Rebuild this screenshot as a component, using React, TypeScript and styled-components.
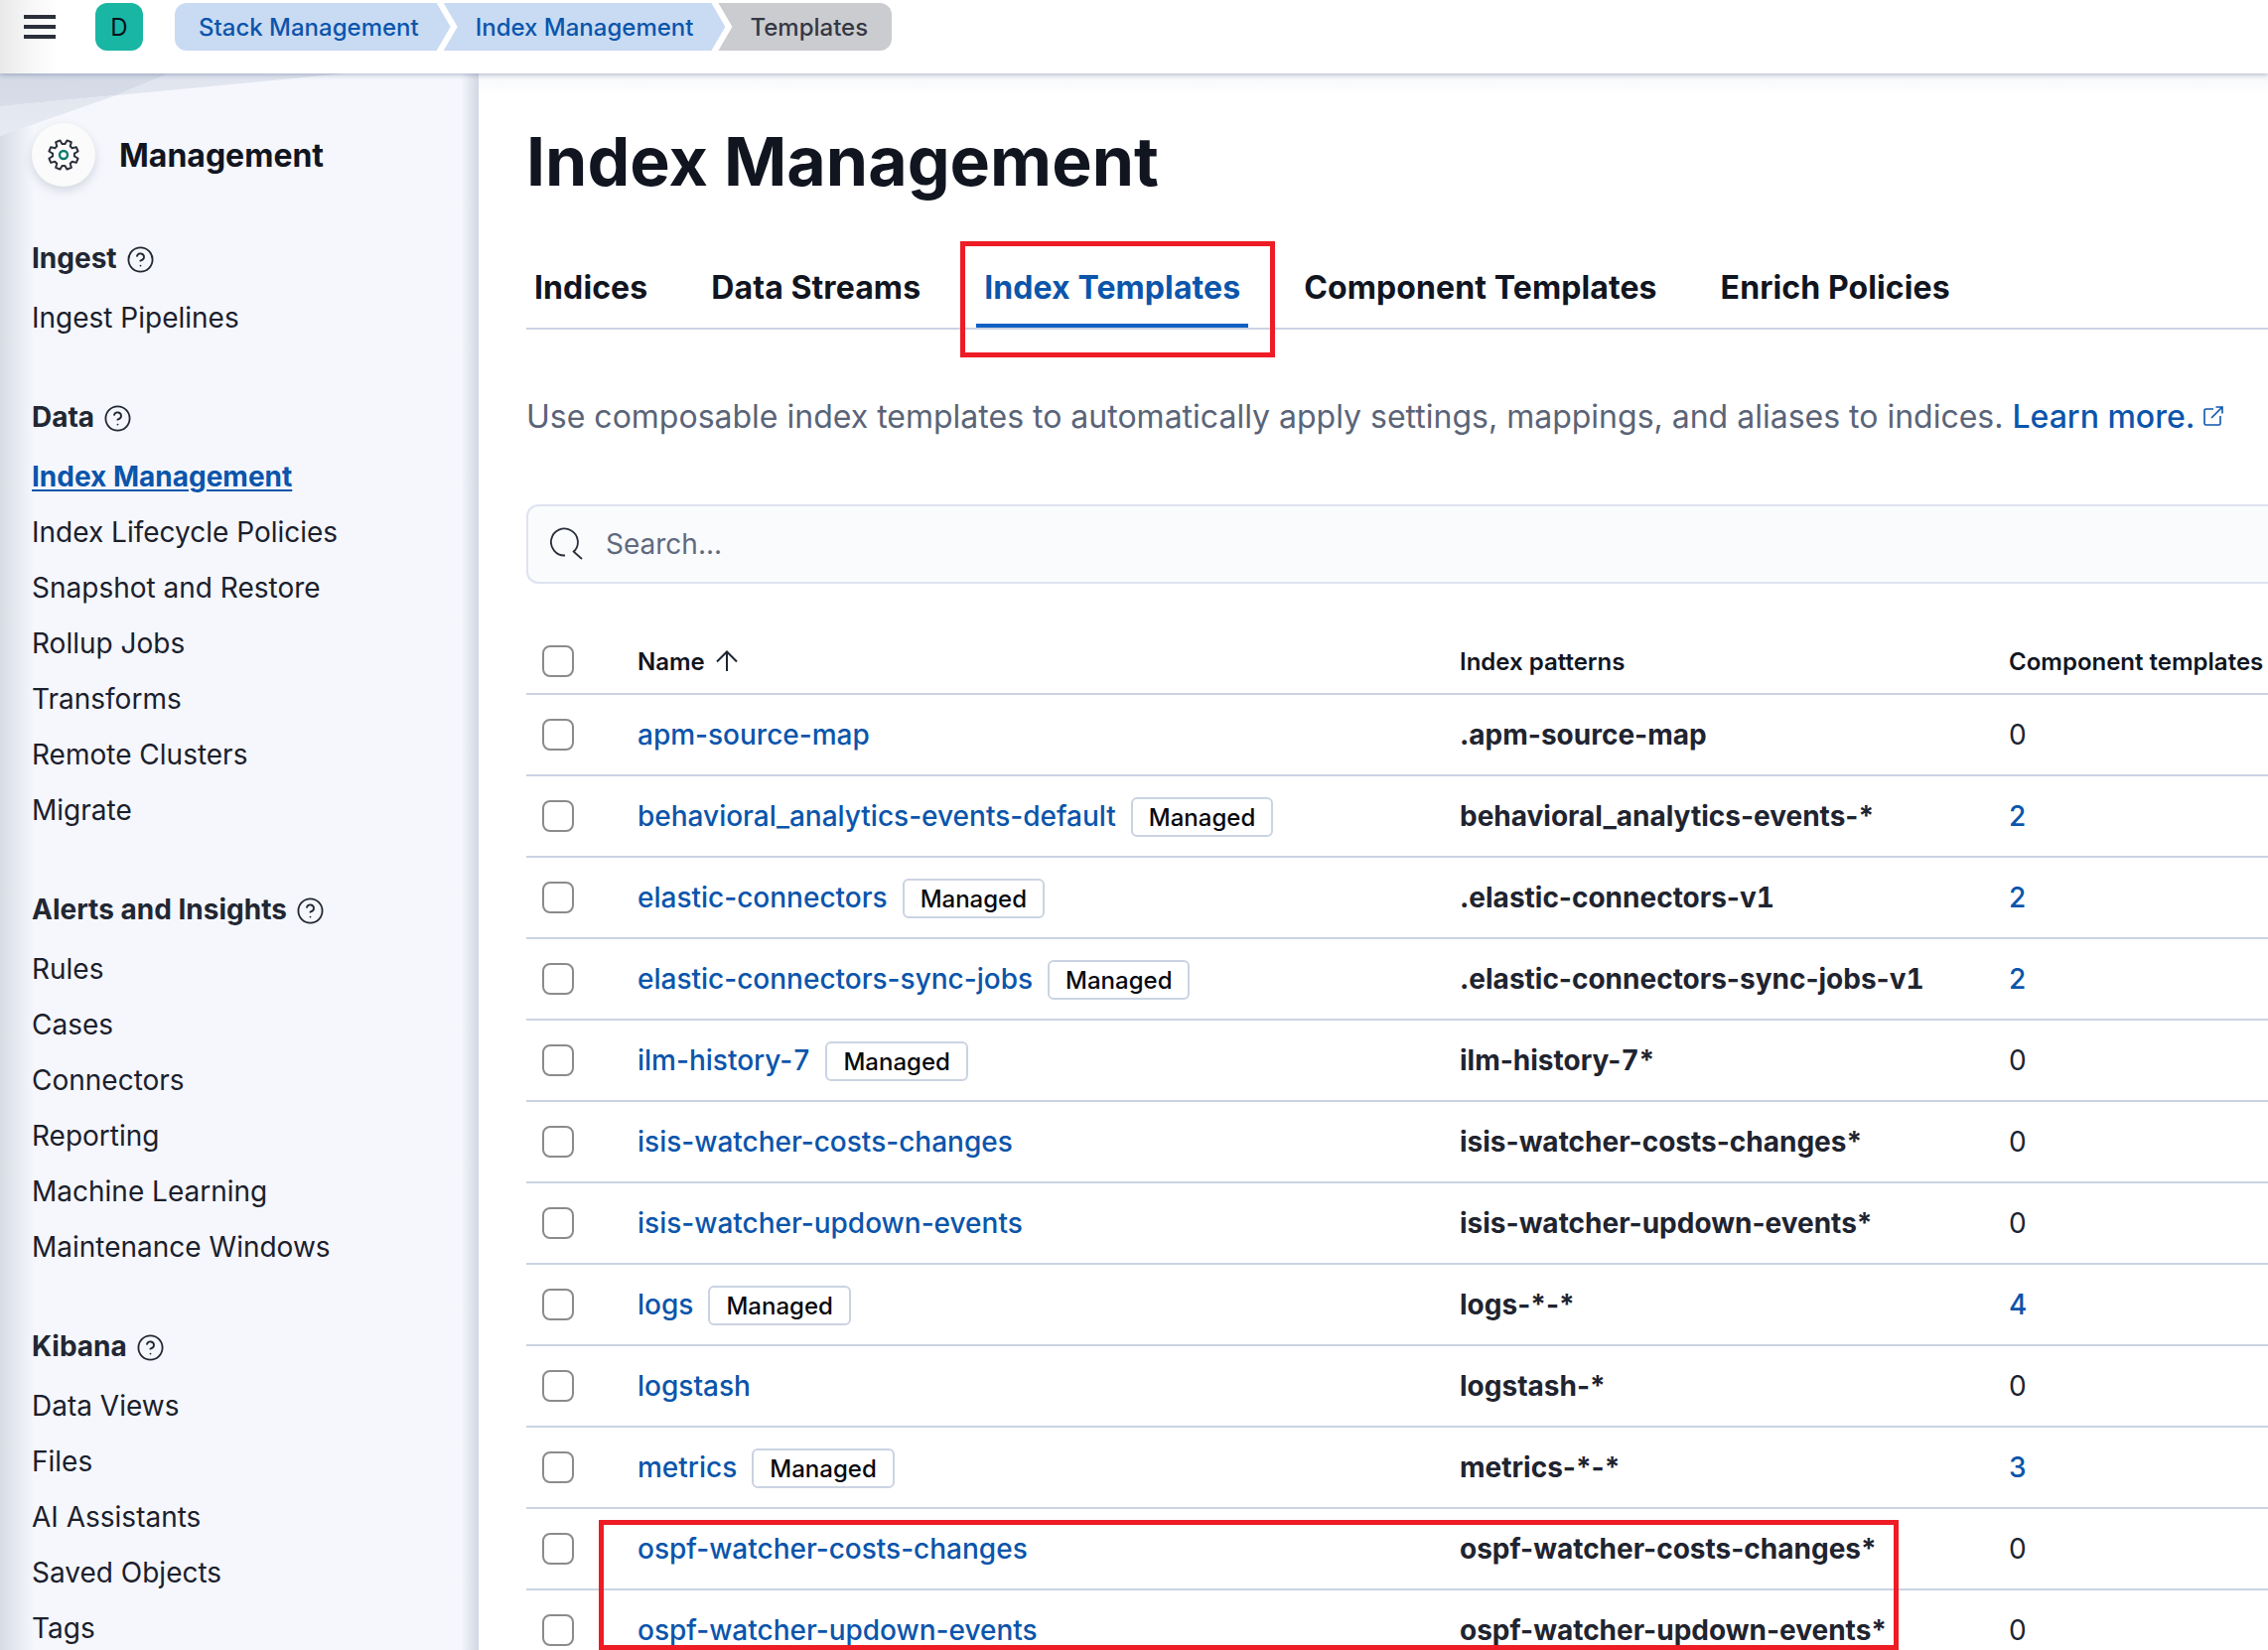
import React from "react";
import styled, { createGlobalStyle } from "styled-components";
import { CircleHelp } from "lucide-react";

const GlobalStyle = createGlobalStyle`
  html, body {
    margin: 0;
    padding: 0;
    background: #ffffff;
  }
  body {
    font-family: Inter, "Noto Sans", "Liberation Sans", sans-serif;
    color: #1d2433;
  }
  * {
    box-sizing: border-box;
  }
`;

const Page = styled.div`
  position: relative;
  width: 2284px;
  height: 1662px;
  overflow: hidden;
  display: flex;
  flex-direction: column;
`;

const Header = styled.header`
  position: relative;
  z-index: 2;
  flex: 0 0 74px;
  display: flex;
  align-items: flex-start;
  padding: 3px 0 0 24px;
  background: linear-gradient(90deg, #e9e9ea 0, #f8f8f9 34px, #ffffff 60px);
  box-shadow: 0 1px 5px rgba(74, 94, 136, 0.45);
`;

const MenuButton = styled.div`
  width: 32px;
  height: 48px;
  display: flex;
  flex-direction: column;
  gap: 6px;
  padding-top: 12px;
  span {
    height: 4px;
    background: #2b2f3a;
  }
`;

const Avatar = styled.div`
  width: 48px;
  height: 48px;
  margin-left: 40px;
  border-radius: 12px;
  background: #19b6a4;
  color: #07101a;
  font-size: 24px;
  display: flex;
  align-items: center;
  justify-content: center;
`;

const Crumbs = styled.nav`
  display: flex;
  margin-left: 32px;
`;

type CrumbKind = "first" | "middle" | "last";

const crumbClip: Record<CrumbKind, string> = {
  first: "polygon(0 0, calc(100% - 14px) 0, 100% 50%, calc(100% - 14px) 100%, 0 100%)",
  middle: "polygon(0 0, calc(100% - 14px) 0, 100% 50%, calc(100% - 14px) 100%, 0 100%, 14px 50%)",
  last: "polygon(0 0, 100% 0, 100% 100%, 0 100%, 14px 50%)",
};

const Crumb = styled.a<{ $kind: CrumbKind }>`
  height: 48px;
  display: flex;
  align-items: center;
  font-size: 24px;
  font-weight: 500;
  white-space: nowrap;
  margin-left: ${(p) => (p.$kind === "first" ? "0" : "-7px")};
  padding: ${(p) =>
    p.$kind === "first" ? "0 32px 0 24px" : p.$kind === "last" ? "0 24px 0 32px" : "0 32px"};
  color: ${(p) => (p.$kind === "last" ? "#343844" : "#0b55ab")};
  background: ${(p) => (p.$kind === "last" ? "#cbccd0" : "#c9dbf3")};
  border-radius: ${(p) =>
    p.$kind === "first" ? "12px 0 0 12px" : p.$kind === "last" ? "0 12px 12px 0" : "0"};
  clip-path: ${(p) => crumbClip[p.$kind]};
`;

const Body = styled.div`
  flex: 1;
  display: flex;
  min-height: 0;
`;

const Sidebar = styled.aside`
  position: relative;
  flex: 0 0 482px;
  padding: 50px 0 0 32px;
  background:
    linear-gradient(90deg, rgba(180, 186, 200, 0.45) 0, rgba(180, 186, 200, 0) 34px),
    linear-gradient(270deg, #d2d7e2 0, rgba(210, 215, 226, 0) 18px),
    #f5f7fc;
`;

const WedgeDark = styled.div`
  position: absolute;
  inset: 0 0 auto 0;
  height: 70px;
  background: linear-gradient(180deg, #d3d9e5, #dde2ec);
  clip-path: polygon(0 0, 170px 0, 117px 22px, 0 33px);
`;

const WedgeLight = styled.div`
  position: absolute;
  inset: 0 0 auto 0;
  height: 70px;
  background: linear-gradient(180deg, #dfe4ee, #e8ebf3);
  clip-path: polygon(170px 0, 347px 0, 117px 22px, 0 63px, 0 33px, 117px 22px);
`;

const SideTitle = styled.div`
  position: relative;
  display: flex;
  align-items: center;
  gap: 24px;
  margin-bottom: 44px;
  font-size: 32px;
  font-weight: 700;
  color: #11151f;
`;

const GearBadge = styled.div`
  width: 64px;
  height: 64px;
  border-radius: 50%;
  background: #fbfbfc;
  box-shadow: 0 4px 10px rgba(90, 100, 125, 0.22);
  display: flex;
  align-items: center;
  justify-content: center;
`;

const NavGroup = styled.div`
  position: relative;
  margin-bottom: 44px;
`;

const NavHeading = styled.div`
  height: 56px;
  margin-bottom: 4px;
  display: flex;
  align-items: center;
  gap: 9px;
  font-size: 28px;
  font-weight: 700;
  color: #222733;
  svg {
    margin-top: 2px;
  }
`;

const NavItem = styled.a<{ $active?: boolean }>`
  display: flex;
  align-items: center;
  height: 56px;
  font-size: 28px;
  white-space: nowrap;
  color: ${(p) => (p.$active ? "#0b55ab" : "#1b202c")};
  font-weight: ${(p) => (p.$active ? 700 : 400)};
  text-decoration: ${(p) => (p.$active ? "underline" : "none")};
  text-underline-offset: 3px;
  text-decoration-thickness: 2px;
`;

const Main = styled.main`
  flex: 1;
  min-width: 0;
  padding: 50px 0 0 48px;
  background: linear-gradient(180deg, #f6f7f9 0, #ffffff 22px);
`;

const Title = styled.h1`
  margin: 0;
  height: 78px;
  line-height: 76px;
  font-size: 68px;
  font-weight: 700;
  color: #11151f;
`;

const Tabs = styled.div`
  display: flex;
  gap: 48px;
  height: 76px;
  margin-top: 54px;
  border-bottom: 2px solid #cbd3e2;
`;

const Tab = styled.a<{ $active?: boolean }>`
  height: 74px;
  padding: 0 8px 4px;
  display: flex;
  align-items: center;
  font-size: 32px;
  font-weight: 700;
  letter-spacing: 0.1px;
  white-space: nowrap;
  color: ${(p) => (p.$active ? "#0b55ab" : "#11151f")};
  border-bottom: 4px solid ${(p) => (p.$active ? "#0f60c4" : "transparent")};
`;

const Description = styled.p`
  margin: 59px 0 0;
  display: flex;
  align-items: center;
  height: 56px;
  font-size: 32px;
  color: #5a6478;
  white-space: nowrap;
`;

const LearnLink = styled.a`
  margin-left: 9px;
  color: #0b55ab;
  display: inline-flex;
  align-items: center;
  gap: 9px;
  font-weight: 500;
`;

const SearchBox = styled.div`
  margin-top: 61px;
  width: 1900px;
  height: 80px;
  display: flex;
  align-items: center;
  gap: 22px;
  padding-left: 22px;
  background: #fafbfd;
  border: 2px solid #dfe3f0;
  border-radius: 12px;
  font-size: 28px;
  color: #5f6a80;
`;

const Table = styled.table`
  width: 100%;
  margin-top: 46px;
  border-collapse: collapse;
  table-layout: fixed;
`;

const HeaderCell = styled.th<{ $width?: number }>`
  width: ${(p) => (p.$width ? `${p.$width}px` : "auto")};
  height: 65px;
  padding: 0;
  border-bottom: 2px solid #cbd3e2;
  text-align: left;
  font-size: 24px;
  font-weight: 600;
  color: #11151f;
  white-space: nowrap;
`;

const HeaderInner = styled.span`
  display: inline-flex;
  align-items: center;
  gap: 10px;
`;

const Row = styled.tr`
  height: 82px;
`;

const Cell = styled.td`
  height: 82px;
  padding: 0;
  border-bottom: 2px solid #cbd3e2;
  font-size: 28px;
  white-space: nowrap;
  color: #1d2433;
`;

const PatternCell = styled(Cell)`
  font-weight: 700;
  color: #1f2430;
`;

const NameWrap = styled.div`
  display: flex;
  align-items: center;
  gap: 15px;
`;

const NameLink = styled.a`
  color: #0b55ab;
  font-weight: 500;
`;

const CountLink = styled.a`
  color: #0b55ab;
  font-weight: 500;
`;

const Digit = styled.span`
  font-variant-numeric: tabular-nums;
`;

const Badge = styled.span`
  height: 40px;
  margin-top: 2px;
  display: inline-flex;
  align-items: center;
  padding: 0 16px;
  border: 2px solid #cbd3e2;
  border-radius: 6px;
  font-size: 24px;
  font-weight: 500;
  color: #07090f;
`;

const Checkbox = styled.span`
  display: block;
  width: 32px;
  height: 32px;
  margin-left: 16px;
  border: 2.5px solid #8b8b8d;
  border-radius: 8px;
  background: #ffffff;
`;

const RedBox = styled.div<{ $x: number; $y: number; $w: number; $h: number }>`
  position: absolute;
  left: ${(p) => p.$x}px;
  top: ${(p) => p.$y}px;
  width: ${(p) => p.$w}px;
  height: ${(p) => p.$h}px;
  border: 5px solid #ee1c25;
  pointer-events: none;
`;

const gearPoints = (() => {
  const pts: string[] = [];
  const at = (deg: number, r: number) => {
    const a = (deg * Math.PI) / 180;
    return `${(16 + r * Math.cos(a)).toFixed(2)},${(16 + r * Math.sin(a)).toFixed(2)}`;
  };
  for (let i = 0; i < 8; i++) {
    const c = i * 45 + 22.5;
    pts.push(at(c - 15, 11), at(c - 9, 15), at(c + 9, 15), at(c + 15, 11));
  }
  return pts.join(" ");
})();

const GearIcon = () => (
  <svg width="32" height="32" viewBox="0 0 32 32" fill="none">
    <polygon points={gearPoints} stroke="#2b2f3a" strokeWidth="2" strokeLinejoin="round" />
    <circle cx="16" cy="16" r="4" stroke="#0f7a6e" strokeWidth="2.4" />
  </svg>
);

const SearchIcon = () => (
  <svg width="34" height="34" viewBox="0 0 34 34" fill="none" stroke="#2a2e3a" strokeWidth="1.8">
    <path d="M15 28.5A13.5 13.5 0 1 1 24 24.5" />
    <path d="M23 24l9 8" />
  </svg>
);

const ArrowUpIcon = () => (
  <svg width="24" height="22" viewBox="0 0 24 22" fill="none" stroke="#1d2433" strokeWidth="2">
    <path d="M12 21V1.5M2 11.5 12 1.5l10 10" />
  </svg>
);

const ExternalIcon = () => (
  <svg width="20" height="20" viewBox="0 0 20 20" fill="none" stroke="#0b55ab" strokeWidth="1.6">
    <path d="M10 3H2.5A1.5 1.5 0 0 0 1 4.5v13A1.5 1.5 0 0 0 2.5 19h13a1.5 1.5 0 0 0 1.5-1.5V10" />
    <path d="M8 12 18.5 1.5M12.5 1H19v6.5" />
  </svg>
);

// digits are tabular in the table, hyphens stay proportional
const withDigits = (text: string) =>
  text.split(/(\d)/).map((part, i) => (i % 2 ? <Digit key={i}>{part}</Digit> : part));

const navGroups = [
  { heading: "Ingest", items: ["Ingest Pipelines"] },
  {
    heading: "Data",
    items: [
      "Index Management",
      "Index Lifecycle Policies",
      "Snapshot and Restore",
      "Rollup Jobs",
      "Transforms",
      "Remote Clusters",
      "Migrate",
    ],
  },
  {
    heading: "Alerts and Insights",
    items: ["Rules", "Cases", "Connectors", "Reporting", "Machine Learning", "Maintenance Windows"],
  },
  { heading: "Kibana", items: ["Data Views", "Files", "AI Assistants", "Saved Objects", "Tags"] },
];

const tabs = ["Indices", "Data Streams", "Index Templates", "Component Templates", "Enrich Policies"];

const templates = [
  { name: "apm-source-map", pattern: ".apm-source-map", count: 0 },
  { name: "behavioral_analytics-events-default", managed: true, pattern: "behavioral_analytics-events-*", count: 2 },
  { name: "elastic-connectors", managed: true, pattern: ".elastic-connectors-v1", count: 2 },
  { name: "elastic-connectors-sync-jobs", managed: true, pattern: ".elastic-connectors-sync-jobs-v1", count: 2 },
  { name: "ilm-history-7", managed: true, pattern: "ilm-history-7*", count: 0 },
  { name: "isis-watcher-costs-changes", pattern: "isis-watcher-costs-changes*", count: 0 },
  { name: "isis-watcher-updown-events", pattern: "isis-watcher-updown-events*", count: 0 },
  { name: "logs", managed: true, pattern: "logs-*-*", count: 4 },
  { name: "logstash", pattern: "logstash-*", count: 0 },
  { name: "metrics", managed: true, pattern: "metrics-*-*", count: 3 },
  { name: "ospf-watcher-costs-changes", pattern: "ospf-watcher-costs-changes*", count: 0 },
  { name: "ospf-watcher-updown-events", pattern: "ospf-watcher-updown-events*", count: 0 },
];

const App: React.FC = () => (
  <Page>
    <GlobalStyle />
    <Header>
      <MenuButton>
        <span />
        <span />
        <span />
      </MenuButton>
      <Avatar>D</Avatar>
      <Crumbs>
        <Crumb $kind="first">Stack Management</Crumb>
        <Crumb $kind="middle">Index Management</Crumb>
        <Crumb $kind="last">Templates</Crumb>
      </Crumbs>
    </Header>
    <Body>
      <Sidebar>
        <WedgeDark />
        <WedgeLight />
        <SideTitle>
          <GearBadge>
            <GearIcon />
          </GearBadge>
          Management
        </SideTitle>
        {navGroups.map((group) => (
          <NavGroup key={group.heading}>
            <NavHeading>
              {group.heading}
              <CircleHelp size={29} strokeWidth={1.5} color="#222733" />
            </NavHeading>
            {group.items.map((item) => (
              <NavItem key={item} $active={item === "Index Management"}>
                {item}
              </NavItem>
            ))}
          </NavGroup>
        ))}
      </Sidebar>
      <Main>
        <Title>Index Management</Title>
        <Tabs>
          {tabs.map((tab) => (
            <Tab key={tab} $active={tab === "Index Templates"}>
              {tab}
            </Tab>
          ))}
        </Tabs>
        <Description>
          Use composable index templates to automatically apply settings, mappings, and aliases to
          indices.
          <LearnLink>
            Learn more.
            <ExternalIcon />
          </LearnLink>
        </Description>
        <SearchBox>
          <SearchIcon />
          Search...
        </SearchBox>
        <Table>
          <thead>
            <tr>
              <HeaderCell $width={112}>
                <Checkbox />
              </HeaderCell>
              <HeaderCell $width={828}>
                <HeaderInner>
                  Name
                  <ArrowUpIcon />
                </HeaderInner>
              </HeaderCell>
              <HeaderCell $width={553}>Index patterns</HeaderCell>
              <HeaderCell>Component templates</HeaderCell>
            </tr>
          </thead>
          <tbody>
            {templates.map((t) => (
              <Row key={t.name}>
                <Cell>
                  <Checkbox />
                </Cell>
                <Cell>
                  <NameWrap>
                    <NameLink>{withDigits(t.name)}</NameLink>
                    {t.managed && <Badge>Managed</Badge>}
                  </NameWrap>
                </Cell>
                <PatternCell>{withDigits(t.pattern)}</PatternCell>
                <Cell>{t.count > 0 ? <CountLink>{t.count}</CountLink> : t.count}</Cell>
              </Row>
            ))}
          </tbody>
        </Table>
      </Main>
    </Body>
    <RedBox $x={967} $y={243} $w={317} $h={117} />
    <RedBox $x={603} $y={1531} $w={1309} $h={131} />
  </Page>
);

export default App;
